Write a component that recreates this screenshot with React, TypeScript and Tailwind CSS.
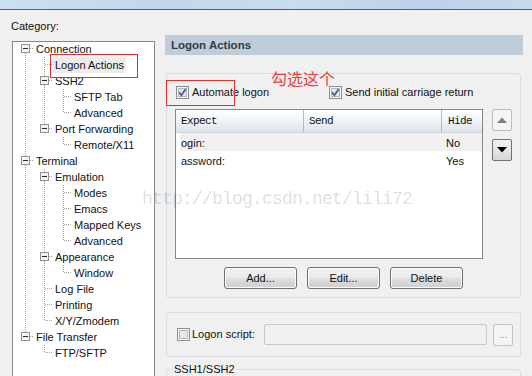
import clsx from 'clsx';

type TreeNode = { label: string; selected?: boolean; children?: TreeNode[] };

type TreeRow = {
  label: string;
  guides: boolean[];
  isLast: boolean;
  isRootFirst: boolean;
  hasChildren: boolean;
  selected?: boolean;
};

const TREE: TreeNode[] = [
  {
    label: 'Connection',
    children: [
      { label: 'Logon Actions', selected: true },
      { label: 'SSH2', children: [{ label: 'SFTP Tab' }, { label: 'Advanced' }] },
      { label: 'Port Forwarding', children: [{ label: 'Remote/X11' }] },
    ],
  },
  {
    label: 'Terminal',
    children: [
      {
        label: 'Emulation',
        children: [{ label: 'Modes' }, { label: 'Emacs' }, { label: 'Mapped Keys' }, { label: 'Advanced' }],
      },
      { label: 'Appearance', children: [{ label: 'Window' }] },
      { label: 'Log File' },
      { label: 'Printing' },
      { label: 'X/Y/Zmodem' },
    ],
  },
  { label: 'File Transfer', children: [{ label: 'FTP/SFTP' }] },
];

const ROWS = [
  { expect: 'ogin:', send: '', hide: 'No' },
  { expect: 'assword:', send: '', hide: 'Yes' },
];

// 트리를 한 줄씩 펼친다 (조상 세로줄 여부 포함)
function flatten(nodes: TreeNode[], guides: boolean[] = [], rows: TreeRow[] = []) {
  nodes.forEach((node, i) => {
    const isLast = i === nodes.length - 1;
    rows.push({
      label: node.label,
      guides,
      isLast,
      isRootFirst: guides.length === 0 && i === 0,
      hasChildren: !!node.children,
      selected: node.selected,
    });
    if (node.children) flatten(node.children, [...guides, !isLast], rows);
  });
  return rows;
}

const DOT = { stroke: '#a0a0a0', strokeWidth: 1, strokeDasharray: '1 1' };

function Guide({ on }: { on: boolean }) {
  return (
    <svg width="19" height="16" className="shrink-0" shapeRendering="crispEdges">
      {on && <line x1="9.5" y1="0" x2="9.5" y2="16" {...DOT} />}
    </svg>
  );
}

function Connector({ row }: { row: TreeRow }) {
  return (
    <svg width="18" height="16" className="shrink-0" shapeRendering="crispEdges">
      {!row.isRootFirst && <line x1="9.5" y1="0" x2="9.5" y2="8" {...DOT} />}
      {!row.isLast && <line x1="9.5" y1="8" x2="9.5" y2="16" {...DOT} />}
      <line x1="10" y1="7.5" x2="18" y2="7.5" {...DOT} />
      {row.hasChildren && (
        <>
          <rect x="5.5" y="3.5" width="8" height="8" fill="#f3f3f3" stroke="#939393" />
          <line x1="7" y1="7.5" x2="12" y2="7.5" stroke="#1e2b4a" />
        </>
      )}
    </svg>
  );
}

function CheckBox({ checked }: { checked?: boolean }) {
  return (
    <svg width="13" height="13" viewBox="0 0 13 13" className="shrink-0" shapeRendering="crispEdges">
      <rect x="0.5" y="0.5" width="12" height="12" fill="#f6f6f6" stroke="#8e8f8f" />
      <rect x="2.5" y="2.5" width="8" height="8" fill="#e4e6e9" stroke="#b4b8bd" />
      {checked && (
        <path
          d="M3.2 6.4 L5.4 9.2 L9.8 3"
          fill="none"
          stroke="#4a5f97"
          strokeWidth="1.8"
          shapeRendering="geometricPrecision"
        />
      )}
    </svg>
  );
}

function PushButton({ children }: { children: string }) {
  return (
    <button className="h-[22px] w-[73px] rounded-[3px] border border-[#707070] bg-[linear-gradient(#f2f2f2,#ebebeb_45%,#dddddd_55%,#cfcfcf)] text-[11px] leading-[20px] text-[#111] shadow-[inset_0_0_0_1px_#fbfbfb]">
      {children}
    </button>
  );
}

export default function App() {
  const treeRows = flatten(TREE);

  return (
    <div className="relative h-[376px] w-[532px] overflow-hidden bg-[#f0f0f0] font-['Liberation_Sans',Arial,sans-serif] text-[11px] text-[#111]">
      {/* 뒤 창 제목줄 */}
      <div className="h-[10px] border-b border-[#56616c] bg-[linear-gradient(90deg,#cddff0,#c2d7ec_30%,#cadcee_55%,#bcd2e9_80%,#c6d9ed)]" />

      <div className="flex">
        {/* Category */}
        <div className="flex flex-col pl-[11px]">
          <div className="mt-[10px] leading-[13px]">Category:</div>
          <div className="ml-[1px] mt-[8px] h-[340px] w-[143px] border border-[#828790] bg-white pl-[3px]">
            <div className="-mt-[1px]">
              {treeRows.map((row, i) => (
                <div key={i} className="flex h-[16px] items-center">
                  {row.guides.map((g, j) => (
                    <Guide key={j} on={g} />
                  ))}
                  <Connector row={row} />
                  <span
                    className={clsx(
                      'whitespace-nowrap px-[2px] leading-[16px]',
                      row.selected && 'bg-[#ececec]'
                    )}
                  >
                    {row.label}
                  </span>
                </div>
              ))}
            </div>
          </div>
        </div>

        {/* Logon Actions */}
        <div className="ml-[10px] flex w-[358px] flex-col">
          <div className="mt-[25px] h-[20px] bg-[#bfcddb] pl-[6px] text-[11.5px] font-bold leading-[20px] text-[#333a44]">
            Logon Actions
          </div>

          <div className="ml-[1px] mt-[18px] flex h-[225px] w-[355px] flex-col rounded-[3px] border border-[#d5dfe5] pl-[8px] pr-[8px] pt-[12px]">
            <div className="flex h-[13px] items-center">
              <label className="ml-[1px] flex w-[153px] items-center gap-[3px]">
                <CheckBox checked />
                Automate logon
              </label>
              <label className="flex items-center gap-[3px]">
                <CheckBox checked />
                Send initial carriage return
              </label>
            </div>

            <div className="mt-[10px] flex">
              <div className="h-[150px] w-[308px] border border-[#828790] bg-white">
                <div className="flex h-[23px] border-b border-[#d5d5d5] bg-[linear-gradient(#ffffff,#f3f6f9_40%,#dbe3ec)] font-['Liberation_Mono',monospace] text-[11px] leading-[22px] tracking-[-0.6px] text-[#111]">
                  <div className="w-[128px] border-r border-[#a9bbcf] pl-[5px]">Expect</div>
                  <div className="w-[138px] border-r border-[#a9bbcf] pl-[5px]">Send</div>
                  <div className="flex-1 pl-[6px]">Hide</div>
                </div>
                {ROWS.map((r, i) => (
                  <div
                    key={i}
                    className={clsx(
                      'ml-[4px] flex h-[18px] items-center pt-[2px]',
                      i === 0 && 'bg-[#f0f0f0]'
                    )}
                  >
                    <div className="w-[124px] pl-[1px]">{r.expect}</div>
                    <div className="w-[138px]">{r.send}</div>
                    <div className="pl-[4px]">{r.hide}</div>
                  </div>
                ))}
              </div>

              <div className="ml-[9px] flex flex-col gap-[8px]">
                <button className="flex h-[22px] w-[20px] items-center justify-center rounded-[2px] border border-[#bcbcbc] bg-[#f4f4f4]">
                  <svg width="10" height="6" viewBox="0 0 10 6">
                    <path d="M0 6 L5 0.5 L10 6 Z" fill="#7d7d7d" />
                  </svg>
                </button>
                <button className="flex h-[22px] w-[20px] items-center justify-center rounded-[2px] border border-[#707070] bg-[linear-gradient(#f2f2f2,#e6e6e6_50%,#d6d6d6)]">
                  <svg width="10" height="6" viewBox="0 0 10 6">
                    <path d="M0 0 L10 0 L5 5.5 Z" fill="#000" />
                  </svg>
                </button>
              </div>
            </div>

            <div className="mt-[8px] flex justify-center gap-[10px]">
              <PushButton>Add...</PushButton>
              <PushButton>Edit...</PushButton>
              <PushButton>Delete</PushButton>
            </div>
          </div>

          <div className="ml-[1px] mt-[14px] flex h-[45px] w-[355px] items-center rounded-[3px] border border-[#d5dfe5] pl-[10px] pr-[7px]">
            <label className="flex w-[87px] items-center gap-[2px]">
              <CheckBox />
              Logon script:
            </label>
            <div className="h-[21px] w-[223px] rounded-[2px] border border-[#c5c9cc] bg-[#f0f0f0]" />
            <button className="ml-[6px] h-[22px] w-[20px] rounded-[2px] border border-[#c2c2c2] bg-[#f4f4f4] text-[10px] leading-[20px] text-[#9a9a9a]">
              ...
            </button>
          </div>

          <fieldset className="ml-[1px] mt-[6px] h-[40px] w-[355px] rounded-[3px] border border-[#d5dfe5]">
            <legend className="ml-[6px] px-[1px] leading-[13px]">SSH1/SSH2</legend>
          </fieldset>
        </div>
      </div>

      {/* 빨간 표시 */}
      <div className="absolute left-[50px] top-[54px] h-[24px] w-[88px] border border-[#ec2a2a]" />
      <div className="absolute left-[166px] top-[80px] h-[26px] w-[69px] border border-[#ec2a2a]" />
      <div className="absolute left-[271px] top-[70px] font-['Noto_Sans_CJK_SC',sans-serif] text-[16px] leading-[16px] text-[#f03c3c]">
        勾选这个
      </div>

      {/* 워터마크 */}
      <div className="pointer-events-none absolute left-[142px] top-[190px] font-['Liberation_Mono',monospace] text-[18px] leading-[18px] tracking-[-0.8px] text-black/15">
        http://blog.csdn.net/lili72
      </div>
    </div>
  );
}
